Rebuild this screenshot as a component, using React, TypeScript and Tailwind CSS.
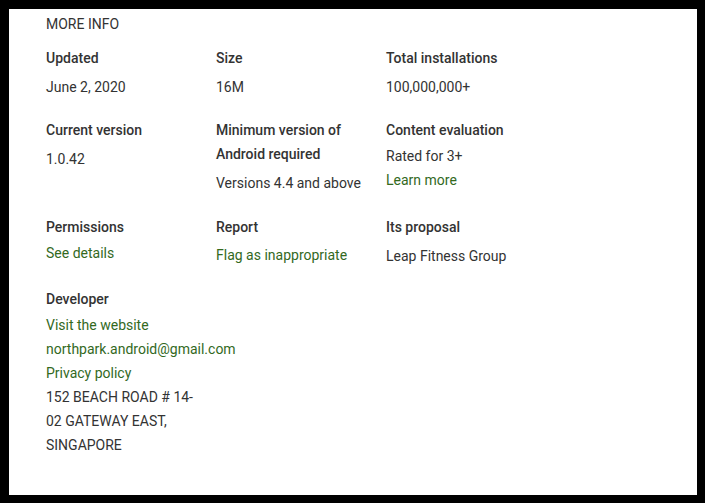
import React from "react";

const H = ({ children }: { children: React.ReactNode }) => (
  <div className="text-[14px] leading-[24px] font-medium text-[#333333]">{children}</div>
);

const V = ({ children, mt = "mt-[5px]" }: { children: React.ReactNode; mt?: string }) => (
  <div className={`text-[14px] leading-[24px] text-[#333333] ${mt}`}>{children}</div>
);

const L = ({ children, mt = "mt-[2px]" }: { children: React.ReactNode; mt?: string }) => (
  <a href="#" className={`block text-[14px] leading-[24px] text-[#33691e] ${mt}`}>{children}</a>
);

export default function App() {
  return (
    <div className="w-[705px] h-[503px] bg-black pt-[9px] pl-[9px] pr-[8px] pb-[8px]" style={{ fontFamily: "Roboto, 'Noto Sans', sans-serif" }}>
      <div className="h-full bg-white pl-[37px] pt-[6px]">
        <div className="text-[14px] leading-[18px] text-[#333333] uppercase">More Info</div>
        <div className="grid grid-cols-[170px_170px_170px] mt-[13px]">
          <div>
            <H>Updated</H>
            <V>June 2, 2020</V>
          </div>
          <div>
            <H>Size</H>
            <V>16M</V>
          </div>
          <div>
            <H>Total installations</H>
            <V>100,000,000+</V>
          </div>
        </div>
        <div className="grid grid-cols-[170px_170px_170px] mt-[19px]">
          <div>
            <H>Current version</H>
            <V>1.0.42</V>
          </div>
          <div>
            <H>Minimum version of<br />Android required</H>
            <V>Versions 4.4 and above</V>
          </div>
          <div>
            <H>Content evaluation</H>
            <V mt="mt-[2px]">Rated for 3+</V>
            <L mt="mt-0">Learn more</L>
          </div>
        </div>
        <div className="grid grid-cols-[170px_170px_170px] mt-[20px]">
          <div>
            <H>Permissions</H>
            <L>See details</L>
          </div>
          <div>
            <H>Report</H>
            <L mt="mt-[4px]">Flag as inappropriate</L>
          </div>
          <div>
            <H>Its proposal</H>
            <V>Leap Fitness Group</V>
          </div>
        </div>
        <div className="mt-[19px] w-[170px]">
          <H>Developer</H>
          <L>Visit the website</L>
          <L mt="mt-0">northpark.android@gmail.com</L>
          <L mt="mt-0">Privacy policy</L>
          <div className="text-[14px] leading-[24px] text-[#333333]">
            152 BEACH ROAD # 14-<br />02 GATEWAY EAST,<br />SINGAPORE
          </div>
        </div>
      </div>
    </div>
  );
}
